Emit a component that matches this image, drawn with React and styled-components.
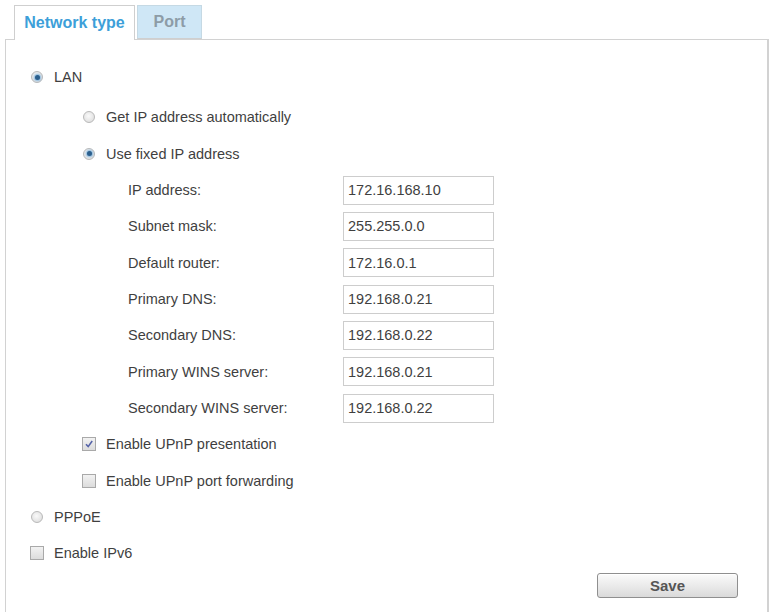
import React from 'react'
import styled, { createGlobalStyle } from 'styled-components'

const GlobalStyle = createGlobalStyle`
  html, body {
    margin: 0;
    padding: 0;
    overflow: hidden;
    background: #fff;
  }
  body {
    font-family: 'Liberation Sans', Arial, sans-serif;
    font-size: 14.5px;
    color: #3f3f3f;
  }
`

const Page = styled.div`
  width: 770px;
  height: 612px;
  overflow: hidden;
  display: flex;
  flex-direction: column;
`

const TabBar = styled.div`
  display: flex;
  gap: 2px;
  padding: 5px 0 0 14px;
  height: 34px;
  box-sizing: content-box;
  flex: none;
`

const Tab = styled.div`
  display: flex;
  align-items: center;
  justify-content: center;
  box-sizing: border-box;
  height: ${p => (p.$active ? '35px' : '34px')};
  width: ${p => p.$width}px;
  font-size: 16px;
  font-weight: bold;
  color: ${p => (p.$active ? '#3d9fd9' : '#8d9ca7')};
  background: ${p => (p.$active ? '#fff' : '#cfe7f6')};
  border: 1px solid ${p => (p.$active ? '#cfcfcf' : '#c5d9e4')};
  border-bottom: ${p => (p.$active ? 'none' : '1px solid #cfcfcf')};
  position: relative;
  z-index: 1;
`

const Panel = styled.div`
  flex: 1;
  margin: 0 1px 0 5px;
  border: 1px solid #d2d2d2;
  border-right-width: 2px;
  border-bottom: none;
  padding: 19px 29px 0 0;
`

const Row = styled.div`
  display: flex;
  align-items: center;
  height: 36.33px;
  padding-left: ${p => p.$indent}px;
  margin-top: ${p => p.$gap || 0}px;
`

const Control = styled.span`
  flex: none;
  width: 14px;
  display: flex;
  justify-content: center;
  margin-right: 10px;
`

const RadioDot = styled.span`
  width: 12px;
  height: 12px;
  border-radius: 50%;
  box-sizing: border-box;
  border: 1px solid #b9b9b9;
  background: radial-gradient(circle at 45% 40%, #fafafa 0%, #e2e2e2 70%, #d2d2d2 100%);
  display: flex;
  align-items: center;
  justify-content: center;

  &::after {
    content: '';
    display: ${p => (p.$checked ? 'block' : 'none')};
    width: 5px;
    height: 5px;
    border-radius: 50%;
    background: #2c5f8c;
    box-shadow: 0 0 2px 1px #7fb3dc;
  }
`

const Box = styled.span`
  width: 14px;
  height: 14px;
  box-sizing: border-box;
  border: 1px solid #a9a9a9;
  background: linear-gradient(#f2f2f2, #dcdcdc);
  display: flex;
  align-items: center;
  justify-content: center;
`

const Label = styled.span`
  white-space: nowrap;
`

const FieldLabel = styled.span`
  width: 215px;
  flex: none;
  white-space: nowrap;
`

const Input = styled.div`
  width: 151px;
  height: 29px;
  box-sizing: border-box;
  border: 1px solid #cdcdcd;
  padding: 0 4px;
  display: flex;
  align-items: center;
  background: #fff;
`

const Footer = styled.div`
  display: flex;
  justify-content: flex-end;
  margin-top: 1px;
`

const Button = styled.button`
  width: 141px;
  height: 25px;
  border: 1px solid #8f8f8f;
  border-radius: 3px;
  background: linear-gradient(#fbfbfb, #e9e9e9 55%, #dadada);
  box-shadow: inset 0 1px 0 #fff;
  font-family: 'Liberation Sans', Arial, sans-serif;
  font-size: 15px;
  font-weight: bold;
  color: #555;
  padding: 0;
`

const Radio = ({ checked }) => (
  <Control>
    <RadioDot $checked={checked} />
  </Control>
)

const Checkbox = ({ checked }) => (
  <Control>
    <Box>
      {checked && (
        <svg width="10" height="10" viewBox="0 0 10 10">
          <path d="M2 5.2 L4.2 7.6 L8.2 2" fill="none" stroke="#5563a8" strokeWidth="1.6" />
        </svg>
      )}
    </Box>
  </Control>
)

const fields = [
  ['IP address:', '172.16.168.10'],
  ['Subnet mask:', '255.255.0.0'],
  ['Default router:', '172.16.0.1'],
  ['Primary DNS:', '192.168.0.21'],
  ['Secondary DNS:', '192.168.0.22'],
  ['Primary WINS server:', '192.168.0.21'],
  ['Secondary WINS server:', '192.168.0.22']
]

export default function App() {
  return (
    <Page>
      <GlobalStyle />
      <TabBar>
        <Tab $active $width={121}>Network type</Tab>
        <Tab $width={65}>Port</Tab>
      </TabBar>
      <Panel>
        <Row $indent={24}>
          <Radio checked />
          <Label>LAN</Label>
        </Row>
        <Row $indent={76} $gap={4}>
          <Radio />
          <Label>Get IP address automatically</Label>
        </Row>
        <Row $indent={76}>
          <Radio checked />
          <Label>Use fixed IP address</Label>
        </Row>
        {fields.map(([name, value]) => (
          <Row key={name} $indent={122}>
            <FieldLabel>{name}</FieldLabel>
            <Input>{value}</Input>
          </Row>
        ))}
        <Row $indent={76}>
          <Checkbox checked />
          <Label>Enable UPnP presentation</Label>
        </Row>
        <Row $indent={76}>
          <Checkbox />
          <Label>Enable UPnP port forwarding</Label>
        </Row>
        <Row $indent={24}>
          <Radio />
          <Label>PPPoE</Label>
        </Row>
        <Row $indent={24}>
          <Checkbox />
          <Label>Enable IPv6</Label>
        </Row>
        <Footer>
          <Button>Save</Button>
        </Footer>
      </Panel>
    </Page>
  )
}
